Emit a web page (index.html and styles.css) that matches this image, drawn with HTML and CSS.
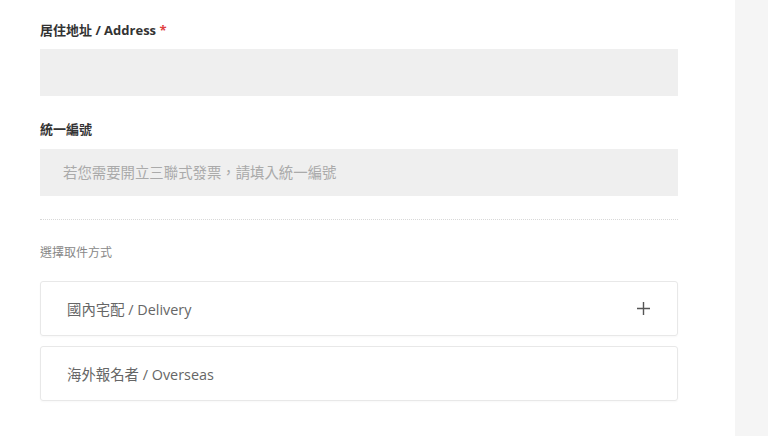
FILE: index.html
```html
<!DOCTYPE html>
<html lang="zh-Hant">
<head>
    <meta charset="UTF-8">
    <meta name="viewport" content="width=device-width, initial-scale=1.0">
    <title>訂購資料</title>
    <link rel="stylesheet" href="styles.css">
</head>
<body>
    <div class="page">
        <!-- 表單主體 -->
        <main class="form-main">
            <div class="form-group">
                <label class="form-label" for="address">居住地址 / Address <span class="required">*</span></label>
                <input class="form-input" type="text" id="address">
            </div>

            <div class="form-group">
                <label class="form-label" for="tax-id">統一編號</label>
                <input class="form-input" type="text" id="tax-id" placeholder="若您需要開立三聯式發票，請填入統一編號">
            </div>

            <hr class="divider">

            <!-- 取件方式 -->
            <p class="section-caption">選擇取件方式</p>
            <div class="option-list">
                <div class="option-card">
                    <span>國內宅配 / Delivery</span>
                    <svg class="option-plus" width="13" height="13" viewBox="0 0 13 13">
                        <path d="M6.5 0V13M0 6.5H13" stroke="#555" stroke-width="1.4" fill="none"/>
                    </svg>
                </div>
                <div class="option-card">
                    <span>海外報名者 / Overseas</span>
                </div>
            </div>
        </main>

        <!-- 右側欄 -->
        <aside class="side-panel"></aside>
    </div>
</body>
</html>
```

FILE: styles.css
```css
/* 基本設定 */
* {
    margin: 0;
    padding: 0;
    box-sizing: border-box;
}

body {
    font-family: 'Open Sans', 'Noto Sans CJK TC', sans-serif;
    background: #fff;
    color: #333;
}

.page {
    display: flex;
    min-height: 436px;
}

.form-main {
    flex: 1;
    padding: 20px 57px 0 40px;
}

.side-panel {
    width: 33px;
    background: #f5f5f5;
}

/* 欄位 */
.form-group {
    margin-bottom: 23px;
}

.form-label {
    display: block;
    font-size: 13px;
    line-height: 20px;
    font-weight: 700;
    color: #333;
    margin-bottom: 9px;
}

.required {
    color: #e0413f;
}

.form-input {
    display: block;
    width: 100%;
    height: 47px;
    border: none;
    background: #efefef;
    padding: 0 23px;
    font-family: inherit;
    font-size: 14.4px;
    color: #555;
    outline: none;
}

.form-input::placeholder {
    color: #aaa;
}

.form-group + .form-group .form-label {
    margin-bottom: 10px;
}

/* 分隔線 */
.divider {
    border: none;
    border-top: 1px dotted #d8d8d8;
    margin-top: 0;
}

.section-caption {
    font-size: 12px;
    line-height: 18px;
    color: #888;
    margin-top: 24px;
    margin-bottom: 19px;
}

/* 取件選項 */
.option-list {
    display: flex;
    flex-direction: column;
    gap: 10px;
}

.option-card {
    display: flex;
    align-items: center;
    justify-content: space-between;
    height: 55px;
    padding: 0 27px 0 26px;
    border: 1px solid #e8e8e8;
    border-radius: 3px;
    box-shadow: 0 1px 2px rgba(0, 0, 0, 0.03);
    font-size: 14.4px;
    color: #666;
}
```
